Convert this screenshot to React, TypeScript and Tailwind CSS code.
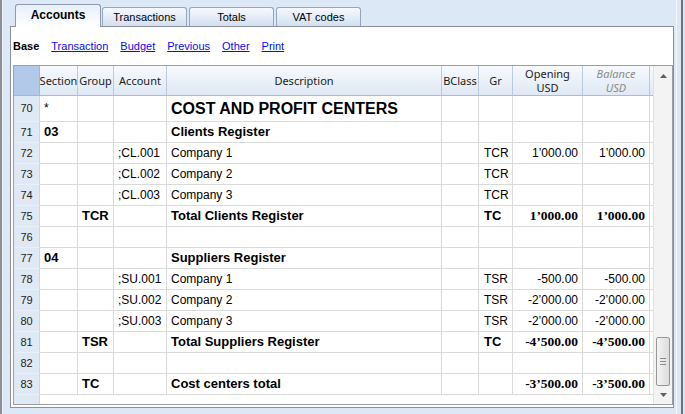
import React from "react"

type Row = {
  n: number
  section?: string
  group?: string
  account?: string
  desc?: string
  gr?: string
  open?: string
  bal?: string
  kind?: "title" | "bold"
}

const rows: Row[] = [
  { n: 70, section: "*", desc: "COST AND PROFIT CENTERS", kind: "title" },
  { n: 71, section: "03", desc: "Clients Register", kind: "bold" },
  { n: 72, account: ";CL.001", desc: "Company 1", gr: "TCR", open: "1’000.00", bal: "1’000.00" },
  { n: 73, account: ";CL.002", desc: "Company 2", gr: "TCR" },
  { n: 74, account: ";CL.003", desc: "Company 3", gr: "TCR" },
  { n: 75, group: "TCR", desc: "Total Clients Register", gr: "TC", open: "1’000.00", bal: "1’000.00", kind: "bold" },
  { n: 76 },
  { n: 77, section: "04", desc: "Suppliers Register", kind: "bold" },
  { n: 78, account: ";SU.001", desc: "Company 1", gr: "TSR", open: "-500.00", bal: "-500.00" },
  { n: 79, account: ";SU.002", desc: "Company 2", gr: "TSR", open: "-2’000.00", bal: "-2’000.00" },
  { n: 80, account: ";SU.003", desc: "Company 3", gr: "TSR", open: "-2’000.00", bal: "-2’000.00" },
  { n: 81, group: "TSR", desc: "Total Suppliers Register", gr: "TC", open: "-4’500.00", bal: "-4’500.00", kind: "bold" },
  { n: 82 },
  { n: 83, group: "TC", desc: "Cost centers total", open: "-3’500.00", bal: "-3’500.00", kind: "bold" },
]

const cols = "grid grid-cols-[26px_38px_36px_53px_275px_37px_34px_70px_67px_1fr]"
const cell = "flex items-center border-r border-b border-[#dadada] px-[4px] overflow-hidden whitespace-nowrap"
const hcell =
  "flex items-center justify-center text-center border-r border-b border-r-[#b9c9de] border-b-[#a9bcd4] bg-gradient-to-b from-[#f7fafd] to-[#dfe8f4] overflow-hidden whitespace-nowrap"

function Arrow({ down }: { down?: boolean }) {
  return (
    <svg width="7" height="4" viewBox="0 0 7 4">
      <polygon points={down ? "0,0 7,0 3.5,4" : "0,4 7,4 3.5,0"} fill="#5f5f5f" />
    </svg>
  )
}

function Scrollbar() {
  return (
    <div className="w-[19px] flex flex-col bg-[#f3f3f3] border-l border-[#e2e2e2]">
      <div className="h-[18px] flex items-center justify-center pt-[2px]">
        <Arrow />
      </div>
      <div className="flex-1" />
      <div className="mx-[2px] h-[49px] rounded-[2px] border border-[#979797] bg-gradient-to-r from-[#f4f4f4] to-[#dcdcdc] flex flex-col items-center justify-center gap-[2px]">
        <div className="w-[6px] h-px bg-[#8a8a8a]" />
        <div className="w-[6px] h-px bg-[#8a8a8a]" />
        <div className="w-[6px] h-px bg-[#8a8a8a]" />
      </div>
      <div className="h-[18px] flex items-center justify-center">
        <Arrow down />
      </div>
    </div>
  )
}

function DataRow({ r }: { r: Row }) {
  const bold = r.kind === "bold"
  const title = r.kind === "title"
  const h = title ? "h-[26px]" : "h-[21px]"
  const txt = bold ? "font-bold text-[13px]" : "text-[12px]"
  const num = bold
    ? "font-bold text-[13.5px] font-['Liberation_Serif',serif]"
    : "text-[12px]"
  return (
    <div className={`${cols} ${h} text-black`}>
      <div className="flex items-center justify-center border-r border-b border-r-[#c9d7e8] border-b-[#e9eff7] bg-[#dfe9f5] text-[11px] text-[#222]">
        {r.n}
      </div>
      <div className={`${cell} ${title ? "text-[12px] items-start pt-[3px]" : txt}`}>{r.section}</div>
      <div className={`${cell} ${txt}`}>{r.group}</div>
      <div className={`${cell} text-[12px] px-[3px]`}>{r.account}</div>
      <div className={`${cell} ${title ? "text-[16px] font-bold" : txt}`}>{r.desc}</div>
      <div className={cell} />
      <div className={`${cell} ${txt} pl-[5px]`}>{r.gr}</div>
      <div className={`${cell} ${num} justify-end`}>{r.open}</div>
      <div className={`${cell} ${num} justify-end`}>{r.bal}</div>
      <div className="border-b border-[#dadada]" />
    </div>
  )
}

export default function App() {
  const tabs = ["Transactions", "Totals", "VAT codes"]
  const links = ["Transaction", "Budget", "Previous", "Other", "Print"]

  return (
    <div className="w-[685px] h-[414px] flex bg-[#dce8f6] overflow-hidden font-['Liberation_Sans',Arial,sans-serif]">
      <div className="w-[2px] bg-[#8b8f96]" />
      <div className="w-[1px] bg-[#eef3fa]" />
      <div className="w-[673px] flex flex-col">
        {/* tabs */}
        <div className="h-[26px] flex items-end pl-[12px] gap-[1px]">
          <div className="relative z-10 -mb-px w-[86px] h-[23px] rounded-t-[3px] border border-b-0 border-[#8d98a8] bg-gradient-to-b from-[#e6effa] to-white flex items-center justify-center pb-[2px] text-[12px] font-bold text-black">
            Accounts
          </div>
          {tabs.map((t) => (
            <div
              key={t}
              className="w-[85px] h-[19px] mr-[1px] rounded-t-[3px] border border-b-0 border-[#93a6c0] bg-gradient-to-b from-[#f6f9fd] to-[#d2e0f1] flex items-center justify-center text-[11px] text-black"
            >
              {t}
            </div>
          ))}
        </div>

        {/* panel */}
        <div className="ml-[7px] w-[664px] h-[382px] bg-white border border-[#8e9096] pl-[2px] flex flex-col">
          <div className="h-[38px] flex items-center gap-[12px] text-[11px]">
            <span className="font-bold text-black">Base</span>
            {links.map((l) => (
              <span key={l} className="text-[#0b0bee] underline">
                {l}
              </span>
            ))}
          </div>

          <div className="w-[660px] h-[340px] border border-[#9c9ea3] flex">
            <div className="flex-1 flex flex-col">
              <div className={`${cols} h-[30px] text-[11px] leading-[14px] text-[#1b1b1b] font-['Noto_Sans',sans-serif]`}>
                <div className="border-r border-b border-r-[#9fb7d9] border-b-[#9fb7d9] bg-[#b2c9ea]" />
                <div className={hcell}>Section</div>
                <div className={hcell}>Group</div>
                <div className={hcell}>Account</div>
                <div className={hcell}>Description</div>
                <div className={hcell}>BClass</div>
                <div className={hcell}>Gr</div>
                <div className={`${hcell} flex-col`}>
                  <span className="block h-[14px]">Opening</span>
                  <span className="block h-[14px]">USD</span>
                </div>
                <div className={`${hcell} flex-col italic text-[#8a8a8a]`}>
                  <span className="block h-[14px]">Balance</span>
                  <span className="block h-[14px]">USD</span>
                </div>
                <div className="border-b border-[#a9bcd4] bg-gradient-to-b from-[#f7fafd] to-[#dfe8f4]" />
              </div>
              {rows.map((r) => (
                <DataRow key={r.n} r={r} />
              ))}
              <div className="flex-1 flex">
                <div className="w-[26px] bg-[#dfe9f5] border-r border-[#c9d7e8]" />
              </div>
            </div>
            <Scrollbar />
          </div>
        </div>
      </div>
      <div className="w-[1px] bg-[#f4f8fc]" />
      <div className="w-[4px]" />
      <div className="w-[2px] bg-[#6f7378]" />
    </div>
  )
}
